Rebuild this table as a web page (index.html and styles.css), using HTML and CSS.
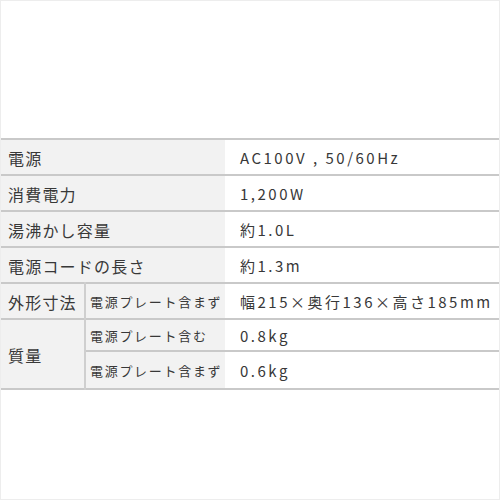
FILE: index.html
```html
<!DOCTYPE html>
<html lang="ja">
<head>
<meta charset="utf-8">
<link rel="stylesheet" href="styles.css">
</head>
<body>
<div class="frame">
  <table class="spec">
    <colgroup>
      <col class="c-main">
      <col class="c-sub">
      <col>
    </colgroup>
    <tr>
      <th colspan="2" class="lab">電源</th>
      <td class="val">AC100V , 50/60Hz</td>
    </tr>
    <tr>
      <th colspan="2" class="lab">消費電力</th>
      <td class="val">1,200W</td>
    </tr>
    <tr>
      <th colspan="2" class="lab">湯沸かし容量</th>
      <td class="val">約1.0L</td>
    </tr>
    <tr>
      <th colspan="2" class="lab">電源コードの長さ</th>
      <td class="val">約1.3m</td>
    </tr>
    <tr>
      <th class="lab">外形寸法</th>
      <th class="sub">電源プレート含まず</th>
      <td class="val">幅215×奥行136×高さ185mm</td>
    </tr>
    <tr class="r-short">
      <th rowspan="2" class="lab">質量</th>
      <th class="sub">電源プレート含む</th>
      <td class="val">0.8kg</td>
    </tr>
    <tr class="r-tall">
      <th class="sub">電源プレート含まず</th>
      <td class="val">0.6kg</td>
    </tr>
  </table>
</div>
</body>
</html>
```

FILE: styles.css
```css
html, body {
  margin: 0;
  padding: 0;
  background: #fff;
}
.frame {
  width: 500px;
  height: 500px;
  box-sizing: border-box;
  border: 1px solid #ededed;
  padding-top: 137px;
  font-family: "Noto Sans CJK JP", "Noto Sans", sans-serif;
  color: #383838;
}
.spec {
  width: 498px;
  border-collapse: collapse;
  table-layout: fixed;
}
.c-main { width: 84px; }
.c-sub { width: 140px; }
.spec tr {
  height: 36px;
  border-top: 2px solid #c9c9c9;
  border-bottom: 2px solid #c9c9c9;
}
.spec tr.r-short { height: 32px; }
.spec tr.r-tall { height: 38px; }
.spec th, .spec td {
  padding: 0;
  text-align: left;
  font-weight: 400;
  vertical-align: middle;
}
.lab {
  background: #f2f2f2;
  font-size: 16px;
  letter-spacing: 1.2px;
  padding-left: 7px !important;
  padding-top: 2px !important;
  white-space: nowrap;
}
.sub {
  background: #f2f2f2;
  border-left: 2px solid #cfcfcf;
  font-size: 13px;
  letter-spacing: 1.7px;
  padding-left: 4px !important;
  white-space: nowrap;
}
.val {
  font-size: 15px;
  letter-spacing: 2.5px;
  padding-left: 15px !important;
  white-space: nowrap;
}
```
